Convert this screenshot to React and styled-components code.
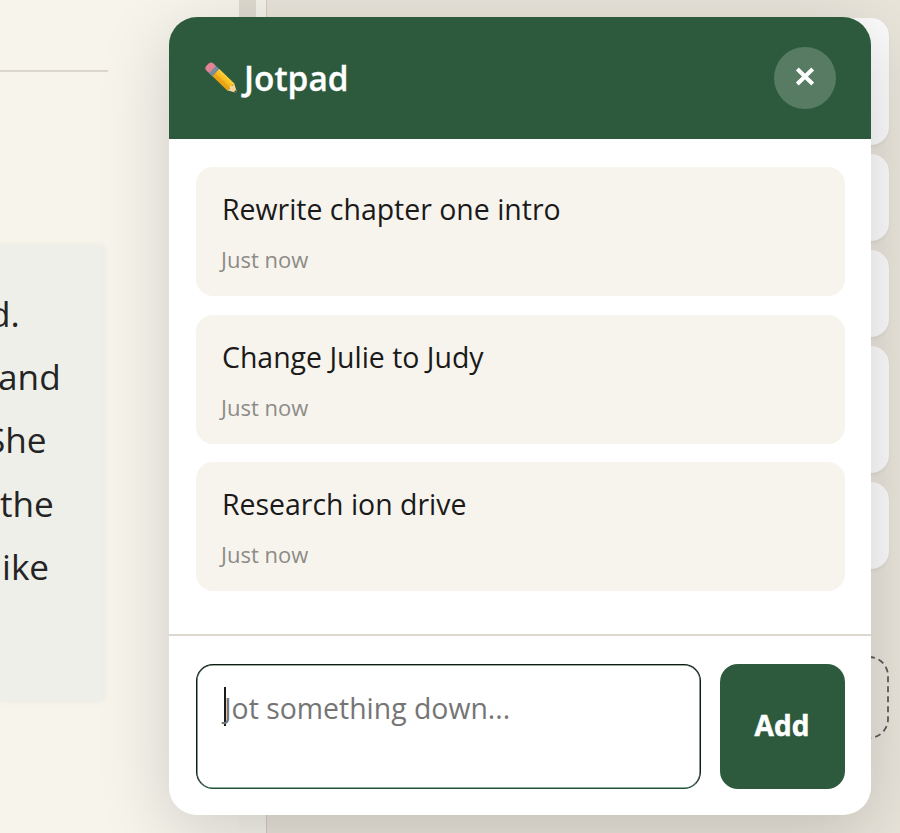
import React from "react";
import styled, { createGlobalStyle } from "styled-components";

const GlobalStyle = createGlobalStyle`
  * { box-sizing: border-box; }
  body { margin: 0; overflow: hidden; }
`;

const Page = styled.div`
  position: relative;
  display: flex;
  width: 900px;
  height: 833px;
  overflow: hidden;
  background: #e9e4da;
  font-family: "Open Sans", "Noto Sans", sans-serif;
  color: #1a1a1a;
`;

const Editor = styled.main`
  flex: 0 0 239px;
  background: #f7f4ec;
`;

const TitleArea = styled.header`
  width: 108px;
  height: 72px;
  border-bottom: 2px solid #dcd7ce;
`;

const Passage = styled.section`
  width: 105px;
  height: 458px;
  margin-top: 172px;
  padding-top: 38px;
  border-radius: 0 8px 8px 0;
  background: #efefe9;
  box-shadow: 0 0 6px rgba(90, 80, 60, 0.05);
  overflow: hidden;
`;

const Line = styled.div`
  height: 63.2px;
  margin-left: ${(p) => p.$shift}px;
  font-size: 35.2px;
  line-height: 63.2px;
  white-space: nowrap;
  color: #242424;
`;

const ScrollGutter = styled.div`
  flex: 0 0 28px;
  border-right: 1px solid #d6cdc2;
  background: #f5f2ea;
`;

const ScrollThumb = styled.div`
  width: 17px;
  height: 400px;
  background: #dedad0;
`;

const Sidebar = styled.aside`
  flex: 1;
  display: flex;
  flex-direction: column;
  align-items: flex-end;
  gap: 9px;
  padding: 18px 11px 0 0;
`;

const SideCard = styled.div`
  width: 560px;
  height: ${(p) => p.$height}px;
  border-radius: 18px;
  background: #fbfbfb;
  box-shadow: 0 2px 3px rgba(0, 0, 0, 0.05);
`;

const DropSlot = styled.svg`
  display: block;
  width: 560px;
  height: 83px;
  margin-top: 78px;
`;

const Modal = styled.div`
  position: absolute;
  left: 169px;
  top: 17px;
  width: 702px;
  height: 798px;
  display: flex;
  flex-direction: column;
  border-radius: 28px;
  background: #fff;
  overflow: hidden;
`;

const ModalShadow = styled.div`
  position: absolute;
  left: 169px;
  top: 17px;
  width: 702px;
  height: 798px;
  border-radius: 28px;
  box-shadow: 0 17px 70px rgba(0, 0, 0, 0.17);
`;

const Header = styled.header`
  flex: 0 0 122px;
  display: flex;
  align-items: center;
  justify-content: space-between;
  padding: 0 35px 0 36px;
  background: #2d5a3d;
  color: #fff;
`;

const Heading = styled.h2`
  display: flex;
  align-items: center;
  gap: 7px;
  margin: 0;
  font-size: 33.4px;
  font-weight: 600;
  line-height: 44px;
  -webkit-text-stroke: 0.3px #fff;
`;

const PencilArt = styled.svg`
  display: block;
  width: 32px;
  height: 32px;
`;

const Close = styled.button`
  display: grid;
  place-items: center;
  width: 62px;
  height: 62px;
  padding: 0 0 2px;
  border: 0;
  border-radius: 50%;
  background: rgba(255, 255, 255, 0.2);
`;

const Notes = styled.div`
  flex: 0 0 495px;
  display: flex;
  flex-direction: column;
  gap: 18.5px;
  padding: 28px 26px 0 27px;
`;

const Note = styled.article`
  height: 129px;
  padding: 21px 25px 0 26px;
  border-radius: 17px;
  background: #f7f4ed;
`;

const NoteText = styled.div`
  font-size: 28.45px;
  line-height: 42px;
  color: #1a1a1a;
`;

const NoteTime = styled.div`
  margin: 11px 0 0 -1px;
  font-size: 22px;
  line-height: 36px;
  color: #8d8b87;
`;

const Composer = styled.footer`
  flex: 1;
  display: flex;
  gap: 19px;
  padding: 28px 26px 26px 27px;
  border-top: 2px solid #dcd8d0;
`;

const Field = styled.div`
  flex: 1;
  display: flex;
  align-items: flex-start;
  height: 125px;
  padding: 22px 24px;
  border: 1px solid #101a14;
  border-bottom-color: #215039;
  border-radius: 17px;
  box-shadow: inset 0 0 0 0.6px #2d5a3d;
  font-size: 28.4px;
  line-height: 42px;
  color: #757575;
`;

const Caret = styled.span`
  width: 2px;
  height: 39px;
  margin: 0 -2px 0 3px;
  background: #1a1a1a;
`;

const Add = styled.button`
  width: 125px;
  height: 125px;
  padding: 0 1px 4px 0;
  border: 0;
  border-radius: 18px;
  background: #2d5a3d;
  color: #fff;
  font-family: inherit;
  font-size: 28px;
  font-weight: 700;
  -webkit-text-stroke: 0.5px #fff;
`;

const notes = ["Rewrite chapter one intro", "Change Julie to Judy", "Research ion drive"];
const lines = [
  { text: "d.", shift: -11 },
  { text: "and", shift: -2 },
  { text: "She", shift: -14 },
  { text: "the", shift: 0 },
  { text: "ike", shift: 2 },
];
const cards = [127, 87, 87, 127, 87];

function Pencil() {
  return (
    <PencilArt viewBox="0 0 32 32" aria-hidden="true">
      <defs>
        <linearGradient id="wood" x1="0" y1="1" x2="0" y2="0">
          <stop offset="0" stopColor="#e79b12" />
          <stop offset="0.5" stopColor="#f6b91c" />
          <stop offset="1" stopColor="#ffd23c" />
        </linearGradient>
      </defs>
      <g transform="translate(4.2 4.4) rotate(43.5)">
        <rect x="-2.4" y="-5" width="9" height="10" rx="3.6" fill="#e58391" />
        <rect x="4.2" y="-5" width="5.2" height="10" fill="#8795a5" />
        <path d="M6 -5V5M8 -5V5" stroke="#667686" strokeWidth="0.8" />
        <path d="M9.2 -5H30V5H9.2Z" fill="url(#wood)" />
        <path d="M9.2 1.7H29" stroke="#df9410" strokeWidth="0.8" />
        <path d="M29.5 -5L36.8 -1Q38 0 36.8 1L29.5 5L30.5 2.2L28.7 0L30.5 -2.3Z" fill="#f7d69b" />
        <path d="M35.6 -1.6L36.8 -1Q38 0 36.8 1L35.6 1.6Z" fill="#55493a" />
      </g>
    </PencilArt>
  );
}

export default function App() {
  return (
    <>
      <GlobalStyle />
      <Page>
        <Editor>
          <TitleArea />
          <Passage>
            {lines.map((l) => (
              <Line key={l.text} $shift={l.shift}>{l.text}</Line>
            ))}
          </Passage>
        </Editor>
        <ScrollGutter>
          <ScrollThumb />
        </ScrollGutter>
        <Sidebar>
          {cards.map((h, i) => (
            <SideCard key={i} $height={h} />
          ))}
          <DropSlot viewBox="0 0 560 83">
            <rect x="1" y="1" width="558" height="81" rx="19" fill="none" stroke="#5e5c58" strokeWidth="1.8" strokeDasharray="6 4" />
          </DropSlot>
        </Sidebar>
        <ModalShadow />
        <Modal>
          <Header>
            <Heading><Pencil />Jotpad</Heading>
            <Close aria-label="Close">
              <svg width="20" height="20" viewBox="0 0 20 20">
                <path d="M2.3 2L17.7 17M17.7 2L2.3 17" stroke="#fff" strokeWidth="4" />
              </svg>
            </Close>
          </Header>
          <Notes>
            {notes.map((n) => (
              <Note key={n}>
                <NoteText>{n}</NoteText>
                <NoteTime>Just now</NoteTime>
              </Note>
            ))}
          </Notes>
          <Composer>
            <Field><Caret />Jot something down...</Field>
            <Add>Add</Add>
          </Composer>
        </Modal>
      </Page>
    </>
  );
}
